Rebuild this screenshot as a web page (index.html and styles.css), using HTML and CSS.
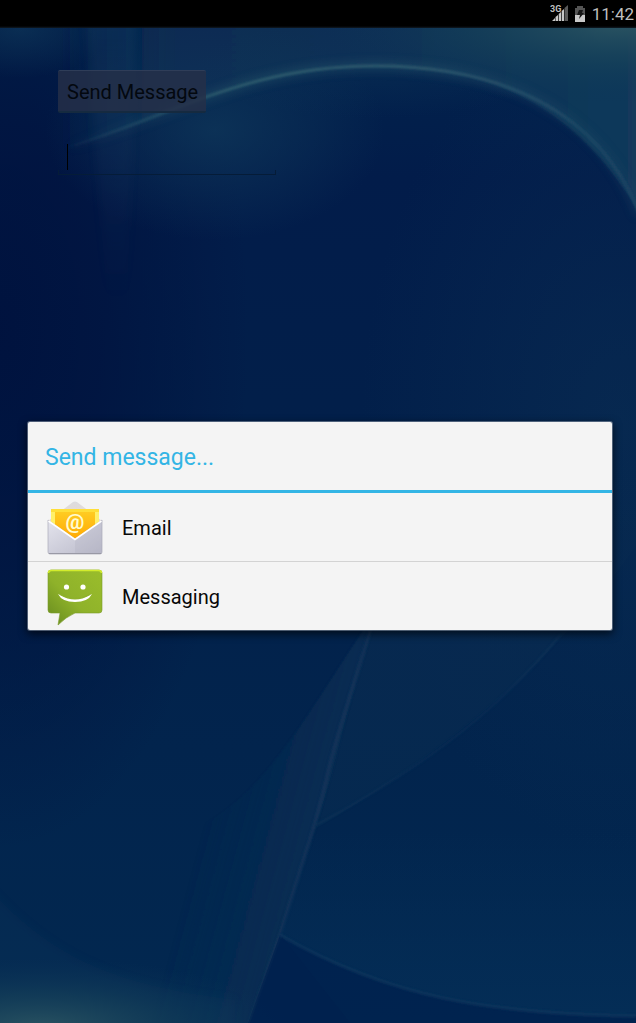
FILE: index.html
```html
<!DOCTYPE html>
<html lang="en">
<head>
<meta charset="utf-8">
<meta name="viewport" content="width=device-width, initial-scale=1">
<title>Send Message</title>
<link rel="stylesheet" href="styles.css">
</head>
<body>
<header class="status">
  <svg class="signal" viewBox="0 0 20 20" aria-hidden="true">
    <text class="network" x="0" y="8">3G</text>
    <path fill="#c8c8c8" d="M2 17l3-3v3zM5.500 17v-4l2.500-2v6zM8.700 17v-7l2.300-2v9zM11.700 17V7l2.300-2v12z"/>
    <path fill="#5b5b5b" d="M14.500 17V4L18 1v16z"/>
  </svg>
  <svg class="battery" viewBox="0 0 12 18" aria-hidden="true">
    <path fill="#555" d="M3 1h6v2h2v7H1V3h2z"/>
    <path fill="#c9c9c9" d="M1 10h10v7H1z"/>
    <path fill="#161616" d="M5 5h4L8 8h2l-5 6 1-4H3z"/>
  </svg>
  <time class="clock">11:42</time>
</header>
<main class="screen">
  <svg class="wallpaper" viewBox="0 28 636 995" preserveAspectRatio="none" aria-hidden="true">
    <defs>
      <linearGradient id="base" x2="0" y2="1">
        <stop offset="0" stop-color="#02244d"/><stop offset=".15" stop-color="#021c4a"/>
        <stop offset=".45" stop-color="#02204a"/><stop offset="1" stop-color="#022850"/>
      </linearGradient>
      <radialGradient id="left">
        <stop offset="0" stop-color="#00123e" stop-opacity=".95"/><stop offset=".4" stop-color="#00123e" stop-opacity=".7"/><stop offset="1" stop-color="#00123e" stop-opacity="0"/>
      </radialGradient>
      <linearGradient id="sky" gradientUnits="userSpaceOnUse" x1="60" y1="0" x2="636" y2="0">
        <stop offset="0" stop-color="#082a50" stop-opacity="0"/><stop offset=".2" stop-color="#0a2c52"/>
        <stop offset=".6" stop-color="#0b2f55"/><stop offset="1" stop-color="#123a5b"/>
      </linearGradient>
      <linearGradient id="rim" gradientUnits="userSpaceOnUse" x1="60" y1="0" x2="636" y2="0">
        <stop offset="0" stop-color="#2d5a70" stop-opacity="0"/><stop offset=".3" stop-color="#2b596c"/>
        <stop offset=".6" stop-color="#2c566c"/><stop offset="1" stop-color="#1a4262"/>
      </linearGradient>
      <radialGradient id="glow"><stop offset="0" stop-color="#0e3659"/><stop offset="1" stop-color="#0e3659" stop-opacity="0"/></radialGradient>
      <radialGradient id="corner"><stop offset="0" stop-color="#2a5361"/><stop offset=".5" stop-color="#174259" stop-opacity=".6"/><stop offset="1" stop-color="#0c3457" stop-opacity="0"/></radialGradient>
      <linearGradient id="fold" gradientUnits="userSpaceOnUse" x1="210" y1="800" x2="315" y2="828">
        <stop offset="0" stop-color="#0a2e53" stop-opacity="0"/><stop offset="1" stop-color="#0c3055"/>
      </linearGradient>
      <linearGradient id="wing" gradientUnits="userSpaceOnUse" x1="0" y1="450" x2="0" y2="820">
        <stop offset="0" stop-color="#082a50" stop-opacity="0"/><stop offset=".5" stop-color="#082a50"/><stop offset="1" stop-color="#062a50"/>
      </linearGradient>
      <linearGradient id="beam" x2="0" y2="1"><stop offset="0" stop-color="#2a466c"/><stop offset="1" stop-color="#2a466c" stop-opacity="0"/></linearGradient>
      <linearGradient id="basin" x2="0" y2="1"><stop offset="0" stop-color="#042c55" stop-opacity="0"/><stop offset="1" stop-color="#042d56"/></linearGradient>
      <filter id="soft1" x="-20%" y="-20%" width="140%" height="140%"><feGaussianBlur stdDeviation="1"/></filter>
      <filter id="soft4" x="-20%" y="-20%" width="140%" height="140%"><feGaussianBlur stdDeviation="4"/></filter>
    </defs>
    <path fill="url(#base)" d="M0 28h636v995H0z"/>
    <ellipse cx="620" cy="430" rx="260" ry="420" fill="url(#glow)" opacity=".4"/>
    <ellipse cx="0" cy="330" rx="250" ry="520" fill="url(#left)"/>
    <ellipse cx="20" cy="28" rx="90" ry="50" fill="url(#glow)" opacity=".7"/>
    <path fill="url(#sky)" filter="url(#soft1)" d="M0 -20H680V300C610 110 500 66 375 66C250 66 180 112 67 148L0 160z"/>
    <ellipse cx="215" cy="130" rx="170" ry="110" fill="url(#glow)" opacity=".8"/>
    <ellipse cx="375" cy="68" rx="180" ry="50" fill="url(#glow)" opacity=".35"/>
    <path fill="url(#beam)" opacity=".25" filter="url(#soft4)" d="M85 0h52l-10 300h-20z"/>
    <ellipse cx="620" cy="24" rx="300" ry="80" fill="url(#corner)"/>
    <path fill="none" stroke="url(#rim)" stroke-width="10" opacity=".4" filter="url(#soft4)" d="M67 148C180 112 250 66 375 66C500 66 600 110 640 215"/>
    <path fill="none" stroke="url(#rim)" stroke-width="3" filter="url(#soft1)" d="M67 148C180 112 250 66 375 66C500 66 600 110 640 215"/>
    <path fill="url(#wing)" opacity=".8" d="M390 450H640V540C550 670 440 755 313 830C330 760 345 700 370 630z"/>
    <path fill="url(#fold)" opacity=".7" filter="url(#soft1)" d="M370 620C345 720 330 790 313 830L280 935L245 1035H80V850C240 850 270 770 370 620z"/>
    <path fill="none" stroke="#12365a" stroke-width="4" opacity=".7" filter="url(#soft1)" d="M370 630C350 700 338 730 328 772C323 795 317 815 313 830L280 935L250 1023"/>
    <path fill="none" stroke="#12365a" stroke-width="2" opacity=".5" filter="url(#soft1)" d="M560 635C490 722 400 780 316 825"/>
    <path fill="url(#basin)" d="M280 935C390 998 490 1014 636 1016V830H313z"/>
    <path fill="#00214f" opacity=".75" d="M280 935C390 998 490 1014 636 1016v7H248z"/>
    <path fill="none" stroke="#12395e" stroke-width="3" opacity=".7" filter="url(#soft1)" d="M280 935C390 998 490 1014 636 1016"/>
    <path fill="#0d345a" opacity=".3" filter="url(#soft4)" d="M-10 890C50 955 110 985 235 1000V1030H-10z"/>
    <ellipse cx="40" cy="1028" rx="250" ry="70" fill="url(#corner)"/>
    <path fill="#00214f" d="M282 937L250 1023h100z" opacity=".7"/>
  </svg>
  <form class="compose">
    <button class="send" type="button">Send Message</button>
    <input class="message" type="text" aria-label="Message">
  </form>
  <div class="overlay">
    <section class="dialog" role="dialog" aria-labelledby="chooser-title">
      <h1 class="title" id="chooser-title">Send message...</h1>
      <button class="choice" type="button">
        <svg class="app-icon" viewBox="0 0 60 60" aria-hidden="true">
          <defs>
            <linearGradient id="paper" x2="0" y2="1"><stop offset="0" stop-color="#ffce24"/><stop offset="1" stop-color="#ffa400"/></linearGradient>
            <linearGradient id="envelope" x2="1" y2="1"><stop offset="0" stop-color="#e4e4ed"/><stop offset="1" stop-color="#b9b9c9"/></linearGradient>
            <linearGradient id="flap" x2="0" y2="1"><stop offset="0" stop-color="#dcdce0"/><stop offset="1" stop-color="#f2d9c4"/></linearGradient>
          </defs>
          <path fill="url(#flap)" d="M3 23L28 4q2-1 4 0l25 19v10H3z"/>
          <path fill="#fff06a" d="M6 11h48v28H6z"/>
          <path fill="url(#paper)" d="M10 12h40v33H10z"/>
          <path fill="#ffdf39" d="M6 11h48v3H6z"/>
          <text class="at" x="30" y="31" text-anchor="middle">@</text>
          <path fill="url(#envelope)" stroke="#aaaab8" stroke-width=".7" d="M3 22l27 19 27-19v32q0 2-2 2H5q-2 0-2-2z"/>
          <path fill="#aaaabd" opacity=".25" d="M30 41l27-19v34H30z"/>
          <path fill="none" stroke="#fff" stroke-width="1.6" d="M3.500 23L30 41.500 56.500 23"/>
          <path stroke="#9999a5" stroke-width="1.2" d="M4 55.500h52"/>
        </svg>
        <span>Email</span>
      </button>
      <button class="choice" type="button">
        <svg class="app-icon" viewBox="0 0 60 60" aria-hidden="true">
          <defs><linearGradient id="bubble" x1="1" y1="0" x2="0" y2="1"><stop offset="0" stop-color="#9abd2b"/><stop offset=".55" stop-color="#8fb22a"/><stop offset="1" stop-color="#65891e"/></linearGradient></defs>
          <path fill="url(#bubble)" stroke="#7a9a2a" stroke-width=".6" d="M6 3h48q3 0 3 3v37q0 3-3 3H30Q21 50 13 58L15 46H6q-3 0-3-3V6q0-3 3-3z"/>
          <path fill="none" stroke="#d2ec2c" stroke-width="1.600" d="M3.500 6q0-2.500 3-2.500h47q3 0 3 2.500"/>
          <circle cx="21.500" cy="20" r="2.600" fill="#fff"/><circle cx="38" cy="20" r="2.600" fill="#fff"/>
          <path fill="#fff" d="M13 27q17 9 34 0Q43 35 30 35T13 27z"/>
          <path fill="#8fb12b" d="M14 26q16 10 32 0l-1 2q-15 9-30 0z"/>
        </svg>
        <span>Messaging</span>
      </button>
    </section>
  </div>
</main>
</body>
</html>
```
FILE: styles.css
```css
* { box-sizing: border-box; }
body {
  margin: 0;
  min-height: 100vh;
  display: flex;
  flex-direction: column;
  background: #000;
  font-family: Roboto, "Liberation Sans", sans-serif;
}
.status {
  height: 28px;
  padding: 0 2px;
  display: flex;
  align-items: center;
  justify-content: flex-end;
  background: linear-gradient(#000 26px, #101a24);
  color: #bebebe;
}
.signal { width: 20px; height: 20px; margin-right: 4px; }
.network { font-size: 9px; font-weight: 700; fill: #bebebe; }
.battery { width: 12px; height: 18px; margin-right: 6px; }
.clock { font-size: 17px; line-height: 28px; }
.screen { flex: 1; position: relative; display: flex; flex-direction: column; }
.wallpaper { position: absolute; inset: 0; width: 100%; height: 100%; }
.compose {
  position: relative;
  padding: 42px 58px;
  display: flex;
  flex-direction: column;
  align-items: flex-start;
  gap: 24px;
}
.send {
  height: 43px;
  padding: 2px 8px 0 9px;
  border: 0;
  border-top: 1px solid #2f3d58;
  border-bottom: 2px solid #152a40;
  border-radius: 2px;
  background: rgba(38, 47, 72, 0.82);
  color: #03080f;
  font: 20px Roboto, sans-serif;
}
.message {
  width: 218px;
  height: 38px;
  padding: 0 9px;
  border: 0;
  outline: 0;
  color: #000;
  font: 20px Roboto, sans-serif;
  background:
    linear-gradient(#000, #000) 9px 7px / 1px 26px no-repeat,
    linear-gradient(#051c38, #051c38) 0 100% / 100% 1px no-repeat,
    linear-gradient(#051c38, #051c38) 0 100% / 1px 5px no-repeat,
    linear-gradient(#051c38, #051c38) 100% 100% / 1px 5px no-repeat;
}
.overlay {
  position: absolute;
  inset: 0;
  padding: 0 24px 0 28px;
  display: flex;
  align-items: center;
}
.dialog {
  flex: 1;
  border-radius: 2px;
  background: #f4f4f4;
  box-shadow: 0 0 0 1px rgba(130, 145, 165, 0.6), 0 3px 8px 1px rgba(0, 0, 0, 0.65);
  overflow: hidden;
}
.title {
  margin: 0;
  padding: 4px 17px 0;
  border-bottom: 3px solid #33b5e5;
  color: #33b5e5;
  font-size: 23px;
  font-weight: 400;
  line-height: 64px;
}
.choice {
  width: 100%;
  height: 68px;
  padding: 2px 17px 0;
  border: 0;
  display: flex;
  align-items: center;
  gap: 17px;
  background: none;
  color: #080808;
  font: 20px Roboto, sans-serif;
  text-align: left;
}
.choice + .choice { height: 69px; border-top: 1px solid #d3d3d3; }
.app-icon { width: 60px; height: 60px; }
.at {
  font: 700 21px Roboto, sans-serif;
  fill: #fffbd0;
}
```
